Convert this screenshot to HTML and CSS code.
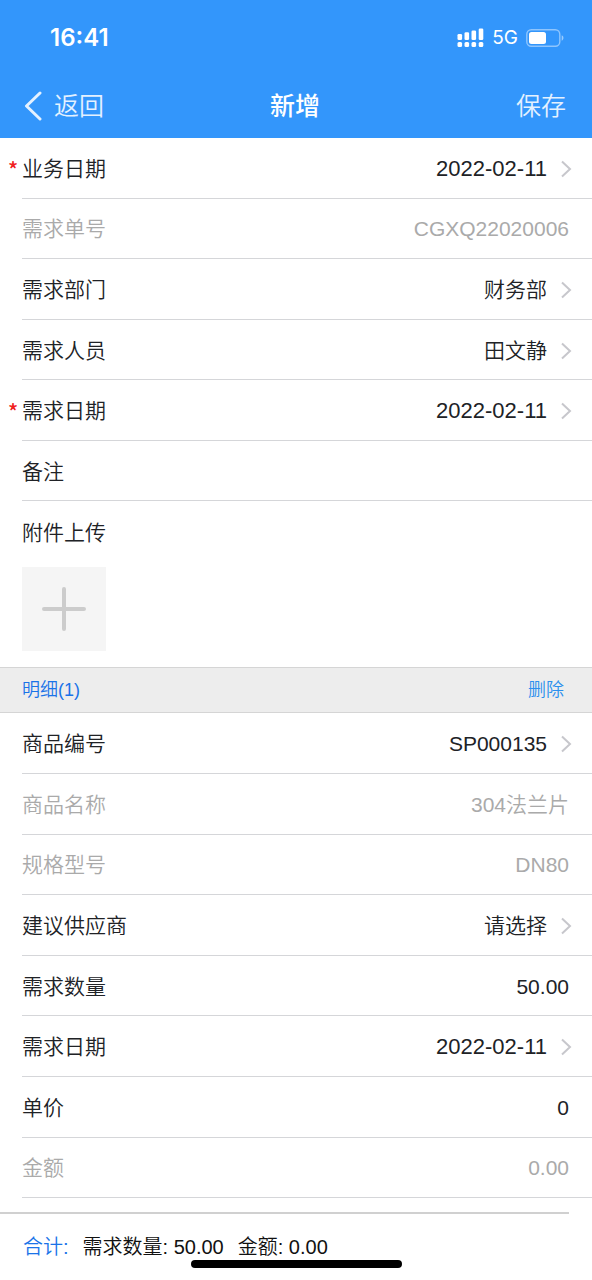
FILE: index.html
```html
<!DOCTYPE html>
<html lang="zh-CN">
<head>
<meta charset="utf-8">
<meta name="viewport" content="width=device-width, initial-scale=1">
<title>新增</title>
<link rel="stylesheet" href="styles.css">
</head>
<body>
<svg class="defs" aria-hidden="true">
  <symbol id="chevron" viewBox="0 0 12 18"><path d="M2 1.5 10 9 2 16.5" fill="none" stroke="#c7c7cc" stroke-width="2"/></symbol>
</svg>
<form class="page">
  <header class="top">
    <div class="status">
      <span class="clock">16:41</span>
      <div class="indicators">
        <svg class="signal" viewBox="0 0 27 20" aria-hidden="true" fill="#fff">
          <rect x="0.5" y="6" width="4.6" height="6" rx="1.3"/><rect x="7.5" y="4.3" width="4.6" height="7.7" rx="1.3"/><rect x="14.5" y="2.5" width="4.6" height="9.5" rx="1.3"/><rect x="21.7" y="0.4" width="4.6" height="11.6" rx="1.3"/>
          <rect x="0.5" y="14" width="4.6" height="5" rx="1.5"/><rect x="7.5" y="14" width="4.6" height="5" rx="1.5"/><rect x="14.5" y="14" width="4.6" height="5" rx="1.5"/><rect x="21.7" y="14" width="4.6" height="5" rx="1.5"/>
        </svg>
        <span class="network">5G</span>
        <svg class="battery" viewBox="0 0 38 18" aria-hidden="true">
          <rect x="0.8" y="0.8" width="33" height="16.4" rx="4.5" fill="none" stroke="#fff" stroke-opacity=".45" stroke-width="1.4"/>
          <rect x="3" y="3" width="17" height="12" rx="2.5" fill="#fff"/>
          <path d="M35.7 6.3c2.3.8 2.3 4.6 0 5.4z" fill="#fff" fill-opacity=".5"/>
        </svg>
      </div>
    </div>
    <nav class="nav">
      <button class="nav-button" type="button">
        <svg class="back" viewBox="0 0 18 30" aria-hidden="true"><path d="M16 2 2.5 15 16 28" fill="none" stroke="#e4f1ff" stroke-width="3" stroke-linecap="round" stroke-linejoin="round"/></svg>返回
      </button>
      <h1 class="title">新增</h1>
      <button class="nav-button save" type="submit">保存</button>
    </nav>
  </header>

  <main class="fields">
    <div class="row required"><label for="biz-date">业务日期</label><button class="pick date" id="biz-date" type="button">2022-02-11<svg class="chevron"><use href="#chevron"/></svg></button></div>
    <div class="row muted"><label for="order-no">需求单号</label><input class="value" id="order-no" value="CGXQ22020006" readonly></div>
    <div class="row"><label for="dept">需求部门</label><button class="pick" id="dept" type="button">财务部<svg class="chevron"><use href="#chevron"/></svg></button></div>
    <div class="row"><label for="person">需求人员</label><button class="pick" id="person" type="button">田文静<svg class="chevron"><use href="#chevron"/></svg></button></div>
    <div class="row required"><label for="need-date">需求日期</label><button class="pick date" id="need-date" type="button">2022-02-11<svg class="chevron"><use href="#chevron"/></svg></button></div>
    <div class="row"><label for="remark">备注</label><input class="value" id="remark"></div>

    <div class="upload">
      <span id="upload-label">附件上传</span>
      <button class="add" type="button" aria-labelledby="upload-label">
        <svg class="plus" viewBox="0 0 44 44" aria-hidden="true"><path d="M22 2v40M2 22h40" stroke="#ccc" stroke-width="4" stroke-linecap="round"/></svg>
      </button>
    </div>

    <div class="section-bar">
      <h2 class="section-title">明细(1)</h2>
      <button class="delete" type="button">删除</button>
    </div>

    <div class="row"><label for="sku">商品编号</label><button class="pick" id="sku" type="button">SP000135<svg class="chevron"><use href="#chevron"/></svg></button></div>
    <div class="row muted"><label for="name">商品名称</label><input class="value" id="name" value="304法兰片" readonly></div>
    <div class="row muted"><label for="spec">规格型号</label><input class="value" id="spec" value="DN80" readonly></div>
    <div class="row"><label for="supplier">建议供应商</label><button class="pick" id="supplier" type="button">请选择<svg class="chevron"><use href="#chevron"/></svg></button></div>
    <div class="row"><label for="qty">需求数量</label><input class="value" id="qty" value="50.00" inputmode="decimal"></div>
    <div class="row"><label for="line-date">需求日期</label><button class="pick date" id="line-date" type="button">2022-02-11<svg class="chevron"><use href="#chevron"/></svg></button></div>
    <div class="row"><label for="price">单价</label><input class="value" id="price" value="0" inputmode="decimal"></div>
    <div class="row muted"><label for="amount">金额</label><input class="value" id="amount" value="0.00" readonly></div>
  </main>

  <footer class="totals">
    <span class="totals-label">合计:</span>
    <span>需求数量: 50.00</span>
    <span>金额: 0.00</span>
    <div class="home-indicator"></div>
  </footer>
</form>
</body>
</html>
```
FILE: styles.css
```css
* { box-sizing: border-box; }

body {
  margin: 0;
  background: #fff;
  color: #202226;
  font-family: "Liberation Sans", "Noto Sans CJK SC", sans-serif;
  font-size: 21px;
  font-weight: 350;
  line-height: 30px;
}

button, input {
  margin: 0;
  padding: 0;
  border: 0;
  background: none;
  color: inherit;
  font: inherit;
}

button { cursor: pointer; }

.defs { display: none; }

.page {
  display: flex;
  flex-direction: column;
  min-height: 100vh;
}

.top {
  background: #3396fb;
  color: #fff;
}

.status {
  display: flex;
  align-items: center;
  justify-content: space-between;
  height: 74px;
  padding: 2px 28px 0 50px;
  font-family: Inter, sans-serif;
}

.clock {
  font-size: 24px;
  font-weight: 600;
}

.indicators {
  display: flex;
  align-items: center;
}

.signal { width: 27px; height: 20px; }

.network {
  margin: 0 8px;
  font-size: 19px;
  font-weight: 400;
}

.battery { width: 38px; height: 18px; }

.nav {
  display: grid;
  grid-template-columns: 1fr auto 1fr;
  align-items: center;
  height: 64px;
  padding: 0 26px 0 24px;
  font-size: 25px;
}

.nav-button {
  display: flex;
  align-items: center;
  justify-self: start;
  gap: 12px;
  color: #e4f1ff;
}

.save { justify-self: end; }

.back { width: 18px; height: 30px; }

.title {
  margin: 0;
  font-size: 25px;
  font-weight: 500;
}

.fields {
  display: flex;
  flex: 1;
  flex-direction: column;
  padding-bottom: 14px;
}

.row {
  position: relative;
  display: flex;
  flex: 1 0 56px;
  align-items: center;
  gap: 16px;
  margin-left: 22px;
  padding-top: 2px;
  border-bottom: 1px solid #d5d6d9;
}

.required::before {
  content: "*";
  position: absolute;
  left: -14px;
  color: #f0201c;
  font-family: "Noto Sans CJK SC", sans-serif;
  font-weight: 500;
}

.muted { color: #aaa; }

.value {
  flex: 1;
  min-width: 0;
  padding-right: 23px;
  outline: 0;
  text-align: right;
}

.pick {
  display: flex;
  flex: 1;
  align-items: center;
  justify-content: flex-end;
  gap: 13px;
  padding-right: 20px;
}

.date { font-size: 22px; }

.chevron { width: 12px; height: 18px; }

.upload {
  display: flex;
  flex-direction: column;
  align-items: flex-start;
  gap: 19px;
  padding: 17px 22px 16px;
}

.add {
  display: grid;
  place-items: center;
  width: 84px;
  height: 84px;
  background: #f5f5f5;
}

.plus { width: 44px; height: 44px; }

.section-bar {
  display: flex;
  align-items: center;
  justify-content: space-between;
  height: 46px;
  padding: 0 28px 0 22px;
  border-top: 1px solid #d5d5d5;
  border-bottom: 1px solid #d5d5d5;
  background: #ededed;
  font-size: 18px;
}

.section-title {
  margin: 0;
  color: #1a73e8;
  font-size: 18px;
  font-weight: 350;
}

.delete { color: #2b90ee; }

.totals {
  position: relative;
  display: flex;
  align-items: center;
  gap: 14px;
  height: 68px;
  margin-right: 23px;
  padding-left: 23px;
  border-top: 2px solid #d0d0d0;
  color: #111;
  font-size: 20px;
}

.totals-label { color: #1a73e8; }

.home-indicator {
  position: absolute;
  bottom: 12px;
  left: 50vw;
  width: 211px;
  height: 8px;
  margin-left: -105px;
  border-radius: 4px;
  background: #000;
}
```
